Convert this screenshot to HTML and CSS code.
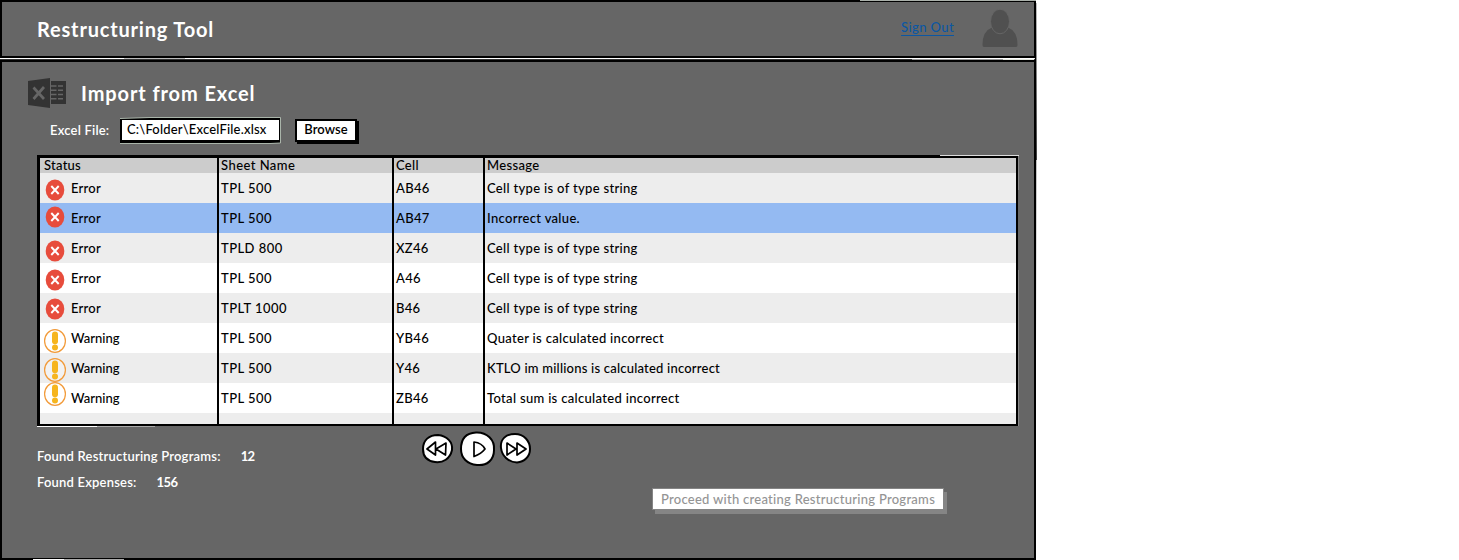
FILE: index.html
```html
<!DOCTYPE html>
<html lang="en">
<head>
<meta charset="utf-8">
<title>Restructuring Tool</title>
<link rel="stylesheet" href="styles.css">
</head>
<body>
<svg class="defs" width="0" height="0" aria-hidden="true">
  <symbol id="error" viewBox="0 0 22 24">
    <ellipse cx="11" cy="12" rx="9.3" ry="10.5" fill="#e74c3c"/>
    <path d="M7.3 8l7.4 8M14.700 8l-7.400 8" stroke="#fff" stroke-width="1.900"/>
  </symbol>
  <symbol id="warning" viewBox="0 0 22 24">
    <ellipse cx="11" cy="12" rx="10.400" ry="11.300" fill="#fff" fill-opacity=".3" stroke="#f29a38" stroke-width="1.200"/>
    <path d="M11 5.600v6.600" stroke="#f6b51e" stroke-width="6" stroke-linecap="round"/>
    <circle cx="11" cy="18.600" r="3" fill="#f6b51e"/>
  </symbol>
</svg>
<div class="app">
  <header class="top">
    <h1 class="title">Restructuring Tool</h1>
    <a class="signout">Sign Out</a>
    <svg class="avatar" width="38" height="40" viewBox="0 0 38 40"><path d="M1.500 36Q1.500 22 11 18.500Q19 29 27 18.500Q36.500 22 36.500 36Q36.500 38 35 38H3Q1.500 38 1.500 36Z" fill="#505050"/><ellipse cx="19" cy="12.500" rx="9.500" ry="12.300" fill="#505050" stroke="#666"/></svg>
  </header>
  <main class="panel">
    <div class="heading">
      <svg class="excel" width="38" height="30" viewBox="0 0 38 30"><path d="M0 3L22 0v30L0 27z" fill="#333"/><path d="M23 3h15v23H23z" fill="#333"/><path d="M23 8h5.500M30 8h5M23 12.200h5.500M30 12.200h5M23 16.500h5.500M30 16.500h5M23 20.800h5.500M30 20.800h5" stroke="#666" stroke-width="1.600"/><path d="M5.500 9.500L16 21M16 9L5.500 21" stroke="#666" stroke-width="2.700"/></svg>
      <h2 class="subtitle">Import from Excel</h2>
    </div>
    <div class="filerow">
      <label class="filelabel">Excel File:</label>
      <div class="input">C:\Folder\ExcelFile.xlsx</div>
      <button class="browse">Browse</button>
    </div>
    <div class="grid">
      <div class="row head"><span>Status</span><span>Sheet Name</span><span>Cell</span><span>Message</span></div>
      <div class="row"><span><svg class="icon d2"><use href="#error"/></svg>Error</span><span>TPL 500</span><span>AB46</span><span>Cell type is of type string</span></div>
      <div class="row selected"><span><svg class="icon u1"><use href="#error"/></svg>Error</span><span>TPL 500</span><span>AB47</span><span>Incorrect value.</span></div>
      <div class="row"><span><svg class="icon d3"><use href="#error"/></svg>Error</span><span>TPLD 800</span><span>XZ46</span><span>Cell type is of type string</span></div>
      <div class="row"><span><svg class="icon d2"><use href="#error"/></svg>Error</span><span>TPL 500</span><span>A46</span><span>Cell type is of type string</span></div>
      <div class="row"><span><svg class="icon d1"><use href="#error"/></svg>Error</span><span>TPLT 1000</span><span>B46</span><span>Cell type is of type string</span></div>
      <div class="row warn"><span><svg class="icon d3"><use href="#warning"/></svg>Warning</span><span>TPL 500</span><span>YB46</span><span>Quater is calculated incorrect</span></div>
      <div class="row warn"><span><svg class="icon d2"><use href="#warning"/></svg>Warning</span><span>TPL 500</span><span>Y46</span><span class="tight">KTLO im millions is calculated incorrect</span></div>
      <div class="row warn"><span><svg class="icon u4"><use href="#warning"/></svg>Warning</span><span>TPL 500</span><span>ZB46</span><span>Total sum is calculated incorrect</span></div>
      <div class="row last"><span></span><span></span><span></span><span></span></div>
    </div>
    <div class="below">
      <div class="stats">
        <p class="stat">Found Restructuring Programs:<b>12</b></p>
        <p class="stat">Found Expenses:<b>156</b></p>
      </div>
      <svg class="player" width="112" height="36" viewBox="0 0 112 36" fill="#fff" stroke="#000" stroke-width="2" stroke-linejoin="round">
        <path d="M2 18C2 9 8 4 17 4C26 5 32 11 31 19C29 28 22 32 14 31C6 30 2 25 2 18Z"/>
        <path d="M40 18C40 8 45 2 55 1.500C66 1 74 9 73 19C73 29 66 35 56 34C46 33 40 27 40 18Z"/>
        <path d="M80 17C79 8 85 3 94 3C103 3 109 10 109 18C109 26 103 31 96 31.500C87 31 81 25 80 17Z"/>
        <g fill="none" stroke-width="1.700"><path d="M14.500 11L6 18L14.500 24ZM25 12L15 18L24.500 24ZM53 11Q61 12 64 18Q60 23 53 25.500ZM86 12L95 18L86 24ZM96 12L105 18L96 24Z"/></g>
      </svg>
      <button class="proceed">Proceed with creating Restructuring Programs</button>
    </div>
  </main>
  <svg class="ink" width="1040" height="560" viewBox="0 0 1040 560" fill="none">
    <path d="M3 58.500H124" stroke="#fff"/><path d="M124 58.500H185" stroke="#bbb"/><path d="M912 59.500H1003" stroke="#999"/><path d="M1003 59.500H1034" stroke="#e5e8e0"/>
    <path d="M185 .5H700" stroke="#000"/><path d="M860 .5H1036" stroke="#aab0aa"/>
    <path d="M37 426.500H97" stroke="#fff"/><path d="M97 426.500H155" stroke="#aaa"/><path d="M940 155.500H1019" stroke="#ddd"/><path d="M1018.500 156V190M1018.500 270V426" stroke="#888"/>
    <path d="M120 118.500L150 117.500H280.500V143L270 143.500H120" stroke="#aab5aa"/>
    <path d="M33 559.500H64" stroke="#fff"/><path d="M64 559.500H124" stroke="#aaa"/>
    <path d="M1035.500 3L1036 160M1035.500 160L1035 558" stroke="#000" stroke-width="1.500"/>
  </svg>
</div>
</body>
</html>
```
FILE: styles.css
```css
* { box-sizing: border-box; }
body { margin: 0; background: #fff; color: #000; font: 13px/18px Lato, "Open Sans", sans-serif; font-weight: 500; letter-spacing: .32px; }
.defs { display: block; }
.app { position: relative; width: 1036px; height: 560px; display: flex; flex-direction: column; color: #fff; }
.top { height: 58px; flex: none; background: #666; border: 2px solid #000; display: flex; align-items: center; padding: 0 15px 0 35px; }
.title, .subtitle { margin: 0; font-size: 20px; line-height: 24px; font-weight: 700; white-space: nowrap; letter-spacing: .82px; }
.subtitle { letter-spacing: .9px; }
.signout { margin: 0 27px 4px auto; color: #0b57a4; text-decoration: underline; text-underline-offset: 3px; letter-spacing: .38px; }
.panel { flex: 1; margin-top: 2px; background: #666; border: 2px solid #000; display: flex; flex-direction: column; box-shadow: 0 -1px #333; }
.heading { display: flex; align-items: center; height: 30px; margin: 16px 0 0 26px; gap: 15px; }
.filerow { display: flex; align-items: center; height: 28px; margin: 8px 0 0 48px; }
.filelabel { width: 70px; font-weight: 600; white-space: nowrap; letter-spacing: .2px; }
.input { width: 161px; height: 25px; background: #fff; color: #000; border: 2px solid #000; border-width: 2px 2px 3px; padding: 0 5px; line-height: 19px; margin-right: 14px; white-space: nowrap; letter-spacing: .18px; }
button { font: inherit; white-space: nowrap; padding: 0; }
.browse { width: 62px; height: 23px; background: #fff; border: 2px solid #000; box-shadow: 2px 2px #000; line-height: 17px; padding-bottom: 2px; font-weight: 600; letter-spacing: .05px; color: #000; }
.grid { width: 981px; height: 271px; margin: 11px 0 0 35px; border: 2px solid #000; border-width: 3px 2px 2px 3px; color: #000; overflow: hidden; background: #fff; }
.row { display: grid; grid-template-columns: 179px 175px 91px 1fr; height: 30px; line-height: 30px; background: #fff; }
.row:nth-child(even) { background: #ededed; }
.row.head { height: 15px; line-height: 15px; background: #ccc; }
.row.selected { background: #94baf2; }
.row:nth-child(4), .row:nth-child(6), .row:nth-child(8) { background: #ededed; }
.row.last { height: 11px; background: #ededed; }
.row > span { display: flex; align-items: center; border-right: 2px solid #000; padding-left: 2px; white-space: nowrap; }
.row > span:nth-child(2) { letter-spacing: .45px; }
.row > span:first-child { padding-left: 4px; letter-spacing: .25px; }
.row.warn > span:first-child { letter-spacing: 0; }
.row > span:last-child { border: 0; }
.row > .tight { letter-spacing: .21px; }
.icon { width: 22px; height: 24px; flex: none; margin-right: 5px; }
.u1 { transform: translateY(-1px); }
.u4 { transform: translateY(-4px); }
.d1 { transform: translateY(1px); }
.d2 { transform: translateY(2px); }
.d3 { transform: translateY(3px); }
.below { display: flex; align-items: flex-start; padding: 4px 0 0 35px; }
.stats { width: 384px; padding-top: 17px; font-weight: 600; letter-spacing: .2px; }
.stat { margin: 0 0 8px; }
.stat b { margin-left: 20px; font-weight: 700; letter-spacing: -.6px; }
.player { margin-top: 1px; }
.proceed { width: 292px; height: 22px; margin: 58px 0 0 119px; background: #fff; color: #949494; border: 1px solid #858585; box-shadow: 3px 4px #858585; letter-spacing: .27px; }
.ink { position: absolute; left: 0; top: 0; pointer-events: none; }
```
